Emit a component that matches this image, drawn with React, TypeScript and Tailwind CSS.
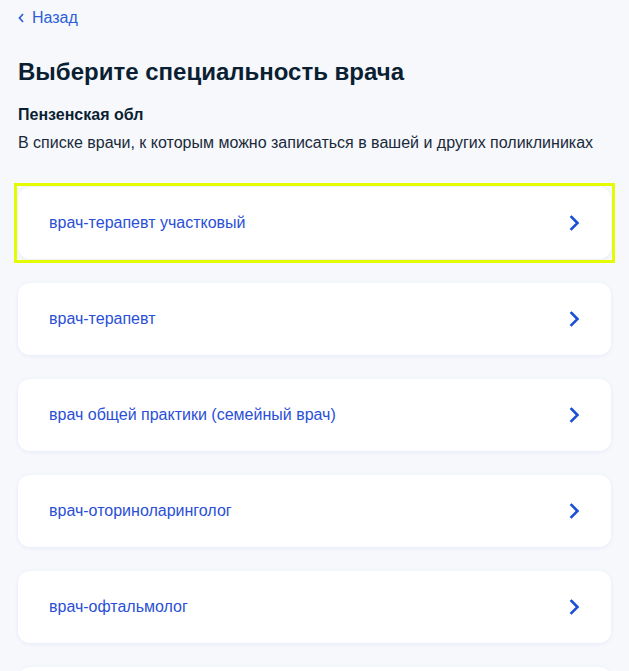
import React from "react";

const items = [
  "врач-терапевт участковый",
  "врач-терапевт",
  "врач общей практики (семейный врач)",
  "врач-оториноларинголог",
  "врач-офтальмолог",
  "",
];

function Chevron({ className }: { className?: string }) {
  return (
    <svg className={className} width="11" height="16" viewBox="0 0 11 16" fill="none">
      <path d="M2.5 2l6 6-6 6" stroke="currentColor" strokeWidth="2.6" strokeLinecap="square" strokeLinejoin="miter" />
    </svg>
  );
}

export default function App() {
  return (
    <div
      className="min-h-[671px] bg-[#f6f8fc] px-[18px] pt-[8px] text-[#0b1f33]"
      style={{ fontFamily: '"Liberation Sans", Arial, sans-serif' }}
    >
      <div className="flex h-[20px] items-center gap-[8px] text-[16px] leading-[20px] text-[#2d5ed8]">
        <svg width="6" height="10" viewBox="0 0 6 10" fill="none">
          <path d="M5 1L1.5 5 5 9" stroke="currentColor" strokeWidth="1.7" />
        </svg>
        <span>Назад</span>
      </div>
      <h1 className="mt-[29px] text-[24px] font-bold leading-[30px] text-[#0b1f33]">
        Выберите специальность врача
      </h1>
      <div className="mt-[17px] text-[16px] font-bold leading-[22px]">Пензенская обл</div>
      <div className="mt-[6px] text-[16px] leading-[22px] text-[#1a2a3a]">
        В списке врачи, к которым можно записаться в вашей и других поликлиниках
      </div>
      <div className="mt-[33px] flex flex-col gap-[24px]">
        {items.map((t, i) => (
          <div
            key={i}
            className={i === 0 ? "outline outline-[3px] outline-offset-[1px] outline-[#e3fc02]" : ""}
          >
            <div className="flex h-[72px] items-center justify-between rounded-[12px] bg-white pl-[31px] pr-[31px] shadow-[0_1px_4px_rgba(40,80,160,0.08)]">
              <span className="text-[16px] text-[#2a4fd6]">{t}</span>
              <Chevron className="text-[#1b4fd4]" />
            </div>
          </div>
        ))}
      </div>
    </div>
  );
}
